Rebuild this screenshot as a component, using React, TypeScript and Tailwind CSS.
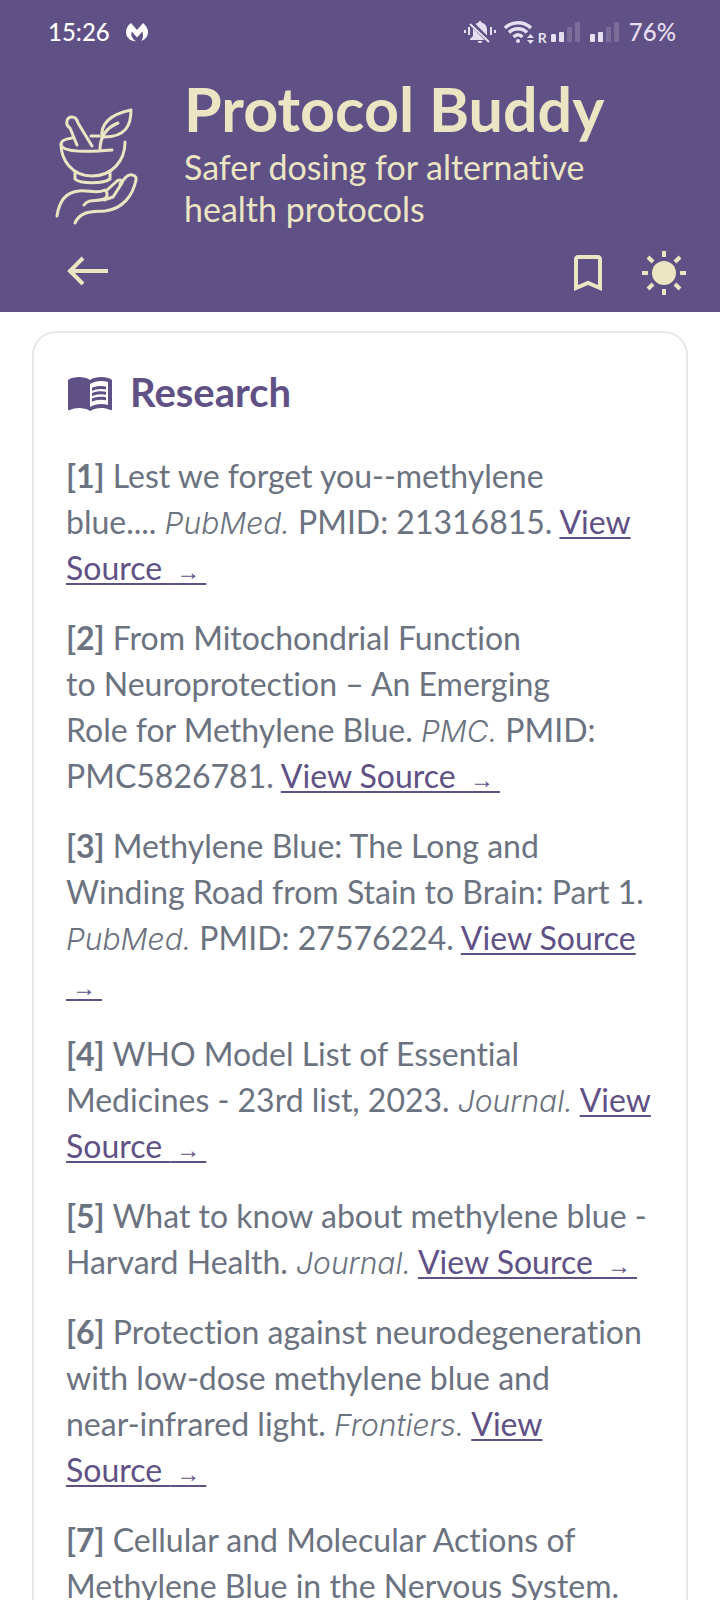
import { MdBookmarkBorder, MdMenuBook } from "react-icons/md";

interface Reference {
  id: number;
  title: string;
  journal: string;
  pmid?: string;
  linkText?: string;
}

const references: Reference[] = [
  { id: 1, title: "Lest we forget you--methylene\nblue....", journal: "PubMed", pmid: "21316815" },
  {
    id: 2,
    title: "From Mitochondrial Function to\u00a0Neuroprotection – An Emerging\nRole for Methylene Blue.",
    journal: "PMC",
    pmid: "PMC5826781",
  },
  {
    id: 3,
    title: "Methylene Blue: The Long and Winding Road from Stain to Brain: Part 1.",
    journal: "PubMed",
    pmid: "27576224",
  },
  { id: 4, title: "WHO Model List of Essential Medicines - 23rd list, 2023.", journal: "Journal" },
  { id: 5, title: "What to know about methylene blue - Harvard Health.", journal: "Journal" },
  {
    id: 6,
    title: "Protection against neurodegeneration with low-dose methylene blue and\nnear-infrared light.",
    journal: "Frontiers",
    linkText: "View\nSource",
  },
  {
    id: 7,
    title: "Cellular and Molecular Actions of Methylene Blue in the Nervous System.",
    journal: "PMC",
    pmid: "PMC3087269",
  },
];

function SignalBars() {
  return (
    <svg viewBox="0 0 29 20" className="h-5 w-[29px]" fill="currentColor">
      <rect x="0" y="12" width="5" height="8" rx="1" />
      <rect x="8" y="10" width="5" height="10" rx="1" />
      <rect x="16" y="5" width="5" height="15" rx="1" opacity="0.2" />
      <rect x="24" y="0" width="5" height="20" rx="1" opacity="0.2" />
    </svg>
  );
}

function StatusBar() {
  return (
    <div className="flex h-16 items-center justify-between pl-12 pr-11 text-2xl font-medium">
      <div className="flex items-center gap-4 text-white">
        <span>15:26</span>
        <svg viewBox="0 0 22 20" className="h-5 w-[22px]" fill="currentColor">
          <path d="M5 1 11 8 17 1C20 3.500 22 6.500 22 10c0 4-2.500 7.500-6.500 9 1.500-2.500 2-6 1-9.500L11 15.500 5.800 9.500C4.500 13 6 17 10 19.200 4.500 19.500 0 15.500 0 10 0 6.500 2 3 5 1Z" />
        </svg>
      </div>
      <div className="flex items-center text-[#e6dff2]">
        <svg viewBox="0 0 32 24" className="h-6 w-8" fill="currentColor">
          <rect x="0" y="10" width="2" height="3" />
          <rect x="4" y="7" width="2" height="8" />
          <rect x="26" y="7" width="2" height="8" />
          <rect x="30" y="10" width="2" height="3" />
          <path d="M16 1c1 0 1.500.6 1.500 1.600C21 3.500 23 6 23 10v6l3 3v1H6v-1l3-3v-6c0-4 2-6.500 5.500-7.400C14.500 1.600 15 1 16 1Zm-2.500 20h5c-.5 1.500-1.500 2-2.500 2s-2-.5-2.500-2Z" />
          <path d="m5 1 21 21" stroke="#5f5185" strokeWidth="5" />
          <path d="m6 4 19 18" stroke="currentColor" strokeWidth="2" />
        </svg>
        <svg viewBox="0 0 30 24" className="ml-2 h-6 w-[30px]" fill="none" stroke="currentColor" strokeWidth="3.4">
          <path d="M1 8c7-7 19-7 26 0M5 12.500c5-5 13-5 18 0M9.500 17c3-3 6-3 9 0" />
          <circle cx="14" cy="21" r="2" fill="currentColor" stroke="none" />
          <path d="m23 18 3.500-4 3.500 4ZM23 20l3.500 4 3.500-4Z" fill="currentColor" stroke="none" />
        </svg>
        <span className="ml-1 mt-3 text-sm font-bold">R</span>
        <span className="ml-1">
          <SignalBars />
        </span>
        <span className="ml-2.5">
          <SignalBars />
        </span>
        <span className="ml-2.5">76%</span>
      </div>
    </div>
  );
}

function Logo() {
  return (
    <svg
      viewBox="0 0 120 150"
      className="h-[150px] w-[120px] shrink-0"
      fill="none"
      stroke="currentColor"
      strokeWidth="3"
      strokeLinecap="round"
      strokeLinejoin="round"
    >
      <path d="M37 55 30 38c-5-3-4-11 2-11 3 0 5 2 6 6l14 23" />
      <path d="M51 46h8" />
      <path d="M60 60c0-10 3-21 18-27" />
      <path d="M62 48c-2-16 10-24 29-28 0 15-5 27-27 27" />
      <path d="M32 48c-7 1-11 3-11 6 0 9 30 8 51 6" />
      <path d="M21 54c0 16 11 32 31 32s33-15 33-34" />
      <path d="M35 83v6c5 5 29 5 35 0v-6" />
      <path d="M17 126c2-14 8-24 22-25 10-1 18 3 26-1 3 3 3 7-1 9-7 3-15-1-20 6" />
      <path d="M66 101 77 91c2-2 6-1 5 2l-9 14-9 3" />
      <path d="m80 94 6-7c4-4 11-2 10 3-3 15-13 29-31 31-12 1-24-1-30 12" />
    </svg>
  );
}

function Header() {
  return (
    <header className="bg-[#5f5185] pb-1.5 text-[#ebe5c3]">
      <StatusBar />
      <div className="flex items-start gap-6 px-10 pt-3">
        <div className="pt-3.5">
          <Logo />
        </div>
        <div className="min-w-0 grow">
          <h1 className="pb-1 text-[61px] leading-[66px] font-bold">Protocol Buddy</h1>
          <p className="max-w-[440px] text-[34px] leading-[42px]">Safer dosing for alternative health protocols</p>
        </div>
      </div>
      <nav className="flex h-[66px] items-center justify-between pr-8 pl-16">
        <button aria-label="Back">
          <svg viewBox="0 0 48 48" className="size-12" fill="none" stroke="currentColor" strokeWidth="4">
            <path d="M44 22H6M19 9 6 22l13 13" />
          </svg>
        </button>
        <div className="flex gap-7">
          <button aria-label="Bookmark">
            <MdBookmarkBorder className="size-12" />
          </button>
          <button aria-label="Toggle theme">
            <svg viewBox="0 0 48 48" className="size-12" fill="none" stroke="currentColor" strokeWidth="4">
              <circle cx="24" cy="24" r="12" fill="currentColor" stroke="none" />
              <path d="M24 2v6M24 40v6M2 24h6M40 24h6M8 8l5 5M35 35l5 5M40 8l-5 5M13 35l-5 5" />
            </svg>
          </button>
        </div>
      </nav>
    </header>
  );
}

function Citation({ id, title, journal, pmid, linkText = "View Source" }: Reference) {
  return (
    <li className="whitespace-pre-line">
      <strong>{`[${id}]`}</strong>
      {` ${title} `}
      <em className="font-[Inter] text-[30px] leading-none font-light">{`${journal}.`}</em>
      {pmid ? ` PMID: ${pmid}. ` : " "}
      <a href="#source" className="text-[#5f5185] underline decoration-2 underline-offset-3">
        {`${linkText} `}
        <span className="font-['Liberation_Serif'] text-2xl leading-none">{"\u00a0→\u00a0"}</span>
      </a>
    </li>
  );
}

export default function App() {
  return (
    <div className="h-screen overflow-hidden bg-white font-[Lato,sans-serif] [font-variant-ligatures:none]">
      <Header />
      <main className="px-8 pt-[19px]">
        <section className="rounded-3xl border-2 border-[#e5e7eb] px-8 py-[34px]">
          <h2 className="mb-9 flex items-center gap-4 text-[40px] leading-[50px] font-bold text-[#5f5185]">
            <MdMenuBook className="size-12" />
            Research
          </h2>
          <ul className="flex flex-col gap-6 text-[32px] leading-[46px] text-[#6b7280]">
            {references.map((r) => (
              <Citation key={r.id} {...r} />
            ))}
          </ul>
        </section>
      </main>
    </div>
  );
}
